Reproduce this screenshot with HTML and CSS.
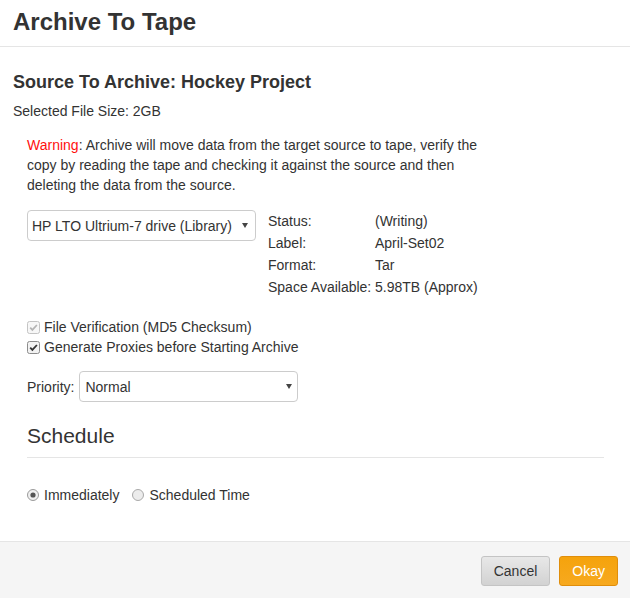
FILE: index.html
```html
<!DOCTYPE html>
<html>
<head>
<meta charset="utf-8">
<title>Archive To Tape</title>
<link rel="stylesheet" href="styles.css">
</head>
<body>
<div class="modal">
  <header class="modal-header">
    <h1 class="title">Archive To Tape</h1>
  </header>
  <main class="modal-body">
    <h2 class="source">Source To Archive: Hockey Project</h2>
    <p class="size">Selected File Size: 2GB</p>
    <div class="indent">
      <p class="warning"><span class="warn-word">Warning</span><span class="warn-text">: Archive will move data from the target source to tape, verify the copy by reading the tape and checking it against the source and then deleting the data from the source.</span></p>
      <div class="drive-row">
        <div class="select drive-select"><span>HP LTO Ultrium-7 drive (Library)</span><span class="arrow"></span></div>
        <div class="info">
          <span>Status:</span><span>(Writing)</span>
          <span>Label:</span><span>April-Set02</span>
          <span>Format:</span><span>Tar</span>
          <span>Space Available:</span><span>5.98TB (Approx)</span>
        </div>
      </div>
      <div class="checks">
        <label class="check disabled">
          <svg class="box" viewBox="0 0 13 13" width="13" height="13"><rect x="0.5" y="0.5" width="12" height="12" rx="2" fill="#f7f7f7" stroke="#c4c4c4"/><path d="M3.2 6.6 L5.4 8.9 L9.9 4" fill="none" stroke="#b4b4b4" stroke-width="1.7"/></svg>
          <span>File Verification (MD5 Checksum)</span>
        </label>
        <label class="check">
          <svg class="box" viewBox="0 0 13 13" width="13" height="13"><rect x="0.5" y="0.5" width="12" height="12" rx="2" fill="#f2f2f2" stroke="#8c8c8c"/><path d="M3.2 6.6 L5.4 8.9 L9.9 4" fill="none" stroke="#333" stroke-width="1.8"/></svg>
          <span>Generate Proxies before Starting Archive</span>
        </label>
      </div>
      <div class="priority-row">
        <span>Priority:</span>
        <div class="select priority-select"><span>Normal</span><span class="arrow"></span></div>
      </div>
      <section class="schedule">
        <h3 class="schedule-title">Schedule</h3>
        <div class="radios">
          <label class="radio">
            <svg viewBox="0 0 12 12" width="12" height="12"><circle cx="6" cy="6" r="5.5" fill="#f0f0f0" stroke="#9a9a9a"/><circle cx="6" cy="6" r="2.6" fill="#555"/></svg>
            <span>Immediately</span>
          </label>
          <label class="radio">
            <svg viewBox="0 0 12 12" width="12" height="12"><circle cx="6" cy="6" r="5.5" fill="#ececec" stroke="#a8a8a8"/></svg>
            <span>Scheduled Time</span>
          </label>
        </div>
      </section>
    </div>
  </main>
  <footer class="modal-footer">
    <button class="btn btn-cancel">Cancel</button>
    <button class="btn btn-okay">Okay</button>
  </footer>
</div>
</body>
</html>
```

FILE: styles.css
```css
html, body {
  margin: 0;
  padding: 0;
}
body {
  font-family: "Liberation Sans", Arial, sans-serif;
  font-size: 14px;
  line-height: 20px;
  color: #333;
  background: #fff;
}
.modal {
  display: flex;
  flex-direction: column;
  min-height: 100vh;
}
.modal-header {
  padding: 7px 13px 9px;
  border-bottom: 1px solid #e5e5e5;
}
.title {
  margin: 0;
  font-size: 24px;
  line-height: 30px;
  font-weight: bold;
}
.modal-body {
  padding: 0 13px;
}
.source {
  margin: 25px 0 0;
  font-size: 18px;
  line-height: 20px;
  font-weight: bold;
}
.size {
  margin: 9px 0 0;
}
.indent {
  padding-left: 14px;
}
.warning {
  margin: 14px 0 0;
  width: 470px;
}
.warn-word {
  color: #ff1010;
}
.drive-row {
  display: flex;
  align-items: flex-start;
  gap: 12px;
  margin-top: 15px;
}
.select {
  display: flex;
  align-items: center;
  box-sizing: border-box;
  height: 31px;
  border: 1px solid #ccc;
  border-radius: 4px;
  background: #fff;
}
.drive-select {
  width: 229px;
  padding: 0 7px 0 4px;
}
.priority-select {
  width: 219px;
  padding: 0 5px 0 5px;
}
.arrow {
  margin-left: auto;
  width: 0;
  height: 0;
  border-left: 3px solid transparent;
  border-right: 3px solid transparent;
  border-top: 5px solid #444;
}
.info {
  display: grid;
  grid-template-columns: 107px auto;
  line-height: 22px;
}
.checks {
  margin-top: 19px;
}
.check, .radio {
  display: flex;
  align-items: center;
  gap: 4px;
}
.check .box {
  margin-top: 1px;
}
.priority-row {
  display: flex;
  align-items: center;
  gap: 5px;
  margin-top: 14px;
}
.schedule {
  margin: 22px 13px 0 0;
}
.schedule-title {
  margin: 0;
  font-size: 21px;
  line-height: 24px;
  font-weight: normal;
  padding-bottom: 9px;
  border-bottom: 1px solid #e5e5e5;
}
.radios {
  display: flex;
  gap: 13px;
  margin-top: 27px;
}
.radio {
  gap: 5px;
}
.modal-footer {
  margin-top: auto;
  display: flex;
  justify-content: flex-end;
  gap: 9px;
  padding: 14px 12px 12px;
  border-top: 1px solid #e5e5e5;
  background: #f5f5f5;
}
.btn {
  height: 30px;
  padding: 0 12px;
  font-family: "Liberation Sans", Arial, sans-serif;
  font-size: 14px;
  border-radius: 3px;
  cursor: pointer;
}
.btn-cancel {
  color: #333;
  border: 1px solid #c4c4c4;
  background: linear-gradient(#e8e8e8, #d2d2d2);
}
.btn-okay {
  color: #fff;
  border: 1px solid #e08e0b;
  background: linear-gradient(#f5a30c, #f7a91f);
}
```
